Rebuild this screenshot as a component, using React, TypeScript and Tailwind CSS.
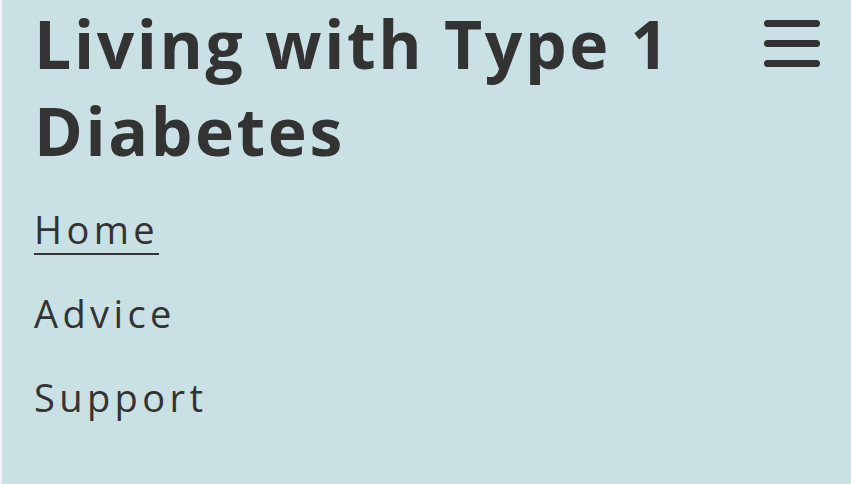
const links = ['Home', 'Advice', 'Support'];

export default function App() {
  return (
    <div className="min-h-[484px] w-full bg-[#c9e1e4] border-l-2 border-[#eef3f4] text-[#333333] font-['Open_Sans',sans-serif]">
      <header className="flex items-start justify-between pl-8 pr-[31px]">
        <h1 className="text-[66px] font-bold leading-[87px] tracking-[2.6px] max-w-[700px]">
          Living with Type 1 Diabetes
        </h1>
        {/* menu toggle */}
        <button className="mt-5 flex flex-col gap-[13px]" aria-label="Menu">
          <span className="block h-[7px] w-[56px] rounded-full bg-[#333333]" />
          <span className="block h-[7px] w-[56px] rounded-full bg-[#333333]" />
          <span className="block h-[7px] w-[56px] rounded-full bg-[#333333]" />
        </button>
      </header>

      <nav className="mt-[31px] pl-8">
        <ul className="flex flex-col items-start gap-[34px]">
          {links.map((link, i) => (
            <li key={link}>
              <a
                href="#"
                className={`inline-block text-[38px] leading-[48px] tracking-[4.4px] border-b-2 ${
                  i === 0 ? 'border-[#333333]' : 'border-transparent'
                }`}
              >
                {link}
              </a>
            </li>
          ))}
        </ul>
      </nav>
    </div>
  );
}
